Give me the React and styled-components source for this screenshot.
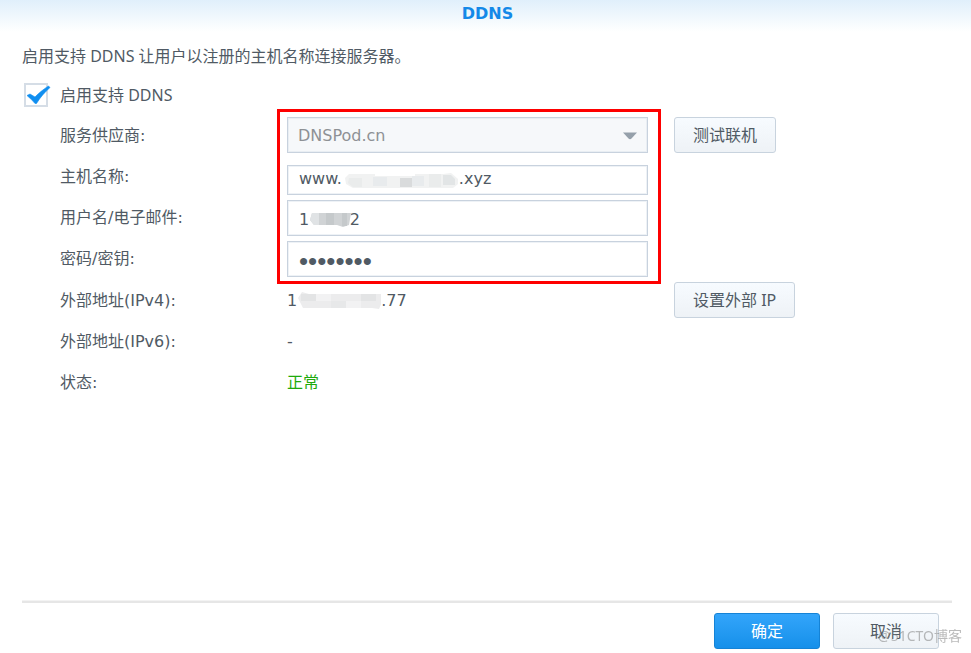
import React, { useState } from 'react'
import styled, { createGlobalStyle } from 'styled-components'

const GlobalStyle = createGlobalStyle`
  * {
    box-sizing: border-box;
  }
  body {
    margin: 0;
    background: #fff;
    color: #505a64;
    font-family: 'DejaVu Sans', 'Noto Sans CJK SC', sans-serif;
    font-size: 16px;
    line-height: 20px;
  }
  button, input, select {
    font: inherit;
    color: inherit;
  }
`
const Dialog = styled.div`
  min-height: 100vh;
  display: flex;
  flex-direction: column;
`
const Header = styled.header`
  height: 32px;
  padding: 4px 0 0 4px;
  text-align: center;
  background: linear-gradient(to bottom, #e0effb, #fff);
  h1 {
    margin: 0;
    font-size: 16px;
    font-weight: 700;
    color: #1489e8;
  }
`
const Content = styled.main`
  flex: 1;
  padding: 14px 22px 24px;
`
const Intro = styled.p`
  margin: 0;
  font-family: 'Noto Sans', 'Noto Sans CJK SC', sans-serif;
`
const CheckLabel = styled.label`
  display: inline-flex;
  align-items: center;
  gap: 12px;
  margin: 17px 0 10px 2px;
  font-family: 'Noto Sans', 'Noto Sans CJK SC', sans-serif;
`
const CheckBox = styled.span`
  position: relative;
  display: flex;
  input {
    appearance: none;
    width: 24px;
    height: 24px;
    margin: 0;
    border: 2px solid #d5dde6;
    background: #fff;
  }
  svg {
    position: absolute;
    left: 0;
    top: 0;
    overflow: visible;
    pointer-events: none;
  }
`
const Form = styled.div`
  display: grid;
  grid-template-columns: 227px minmax(160px, 361px) auto;
  grid-template-rows: 37px 36px 36px 36px 37px;
  grid-auto-rows: 36px;
  row-gap: 5px;
  justify-content: start;
  padding-left: 38px;
`
const Label = styled.label`
  grid-column: 1;
  grid-row: ${({ $row }) => $row};
  align-self: center;
`
const Field = styled.div`
  grid-column: 2;
  grid-row: ${({ $row }) => $row};
  align-self: ${({ $align }) => $align || 'start'};
  position: relative;
  display: flex;
`
const Input = styled.input`
  width: 100%;
  height: ${({ $compact }) => ($compact ? '30px' : '36px')};
  padding: ${({ $compact }) => ($compact ? '0 11px 3px' : '3px 11px 0')};
  border: 1px solid #c8d2de;
  box-shadow: inset 0 0 0 1px #eef2f6;
  border-radius: 0;
  background: #fff;
  outline: none;
`
const PasswordInput = styled(Input)`
  padding-top: 5px;
  font-family: 'Liberation Sans', sans-serif;
  font-size: 26px;
`
const Select = styled.select`
  appearance: none;
  width: 100%;
  height: 36px;
  padding: 2px 32px 0 10px;
  border: 1px solid #c8d2de;
  box-shadow: inset 0 0 0 1px #e9eef3;
  border-radius: 0;
  background: #f6f8fa;
  color: #8e9195;
  opacity: 1;
  outline: none;
`
const Arrow = styled.svg`
  position: absolute;
  right: 11px;
  top: 15px;
  pointer-events: none;
`
const Mask = styled.svg`
  position: absolute;
  left: ${({ $left }) => $left}px;
  top: ${({ $top }) => $top}px;
  pointer-events: none;
`
const Value = styled.output`
  grid-column: 2;
  grid-row: ${({ $row }) => $row};
  align-self: center;
  display: flex;
  align-items: center;
  color: ${({ $ok }) => ($ok ? '#1eaa0c' : 'inherit')};
`
const Frame = styled.div`
  grid-column: 2;
  grid-row: 1 / 5;
  margin: -8px -13px -7px -10px;
  border: 3px solid #fe0000;
  pointer-events: none;
  z-index: 1;
`
const Button = styled.button`
  height: 36px;
  min-width: ${({ $wide }) => ($wide ? '106px' : '0')};
  padding: 0 18px;
  border: 1px solid ${({ $primary }) => ($primary ? '#1583d6' : '#c8d3de')};
  border-radius: 3px;
  background: ${({ $primary }) =>
    $primary
      ? 'linear-gradient(to bottom, #33a5fb, #1690ea)'
      : 'linear-gradient(to bottom, #f7fbff, #eef2f6)'};
  color: ${({ $primary }) => ($primary ? '#fff' : '#505a64')};
  font-family: 'Noto Sans', 'Noto Sans CJK SC', sans-serif;
  cursor: pointer;
`
const SideButton = styled(Button)`
  grid-column: 3;
  grid-row: ${({ $row }) => $row};
  justify-self: start;
  margin-left: 26px;
`
const Footer = styled.footer`
  display: flex;
  justify-content: flex-end;
  gap: 13px;
  margin: 0 19px 0 22px;
  padding: 10px 13px 4px;
  border-top: 2px solid #e6e6e6;
  box-shadow: 0 -1px 0 #f3f3f3;
`
const Watermark = styled.span`
  position: fixed;
  right: 9px;
  bottom: 7px;
  font-family: 'Noto Sans', 'Noto Sans CJK SC', sans-serif;
  font-size: 14px;
  color: rgba(120, 120, 120, 0.5);
  pointer-events: none;
`

const space = (n) => '\u00a0'.repeat(n)

const DDNS = () => {
  const [enabled, setEnabled] = useState(true)
  const [host, setHost] = useState(`www.${space(23)}.xyz`)
  const [user, setUser] = useState(`1${space(8)}2`)
  const [password, setPassword] = useState('password')

  return (
    <Dialog>
      <GlobalStyle />
      <Header>
        <h1>DDNS</h1>
      </Header>
      <Content>
        <Intro>启用支持 DDNS 让用户以注册的主机名称连接服务器。</Intro>
        <CheckLabel>
          <CheckBox>
            <input type='checkbox' checked={enabled} onChange={(e) => setEnabled(e.target.checked)} />
            {enabled && (
              <svg width='26' height='24' viewBox='0 0 26 24'>
                <path d='M3 12.5L6 11L11 14C15 10 19 6.5 24.5 3L26 4.5C20.5 9.5 16.5 14 12.5 20.5H11C8.5 17.5 6 15 3 12.5Z' fill='#0f8ef0' stroke='#0f8ef0' strokeWidth='0.6' />
              </svg>
            )}
          </CheckBox>
          启用支持 DDNS
        </CheckLabel>
        <Form>
          <Label $row={1} htmlFor='provider'>服务供应商:</Label>
          <Field $row={1}>
            <Select id='provider' defaultValue='dnspod'>
              <option value='dnspod'>DNSPod.cn</option>
            </Select>
            <Arrow width='14' height='8' viewBox='0 0 14 8'>
              <path d='M0 0.5H14L8.5 6.5Q7 8 5.5 6.5Z' fill='#95a0aa' />
            </Arrow>
          </Field>
          <SideButton $row={1}>测试联机</SideButton>

          <Label $row={2} htmlFor='host'>主机名称:</Label>
          <Field $row={2} $align='end'>
            <Input $compact id='host' value={host} onChange={(e) => setHost(e.target.value)} />
            <Mask $left={58} $top={7} width='114' height='18' viewBox='0 0 114 18'>
              <path d='M4 2H30V4H70V2H98L106 1L113 7V12L108 16H8L1 12L0 6Z' fill='#f1f2f2' />
              <path d='M4 6H17V15H8L3 11ZM84 2H96V15H84Z' fill='#eaecec' />
              <path d='M55 6H67V15H55Z' fill='#d9dbdc' />
              <path d='M28 5H42V14H28ZM67 4H79V14H67Z' fill='#e8ebed' />
              <path d='M98 3H106L110 7V13H98Z' fill='#e2e5e6' />
            </Mask>
          </Field>

          <Label $row={3} htmlFor='user'>用户名/电子邮件:</Label>
          <Field $row={3}>
            <Input id='user' value={user} onChange={(e) => setUser(e.target.value)} />
            <Mask $left={22} $top={12} width='42' height='16' viewBox='0 0 42 16'>
              <path d='M3 1H42L40 13L34 15L28 13H5L1 8Z' fill='#d0d3d5' />
              <path d='M3 1H10V13H5L1 8Z' fill='#e0e3e5' />
              <path d='M17 1H25V13H17ZM33 1H38V14H33Z' fill='#c5c9cb' />
            </Mask>
          </Field>

          <Label $row={4} htmlFor='password'>密码/密钥:</Label>
          <Field $row={4}>
            <PasswordInput id='password' type='password' value={password} onChange={(e) => setPassword(e.target.value)} />
          </Field>
          <Frame />

          <Label as='span' $row={5}>外部地址(IPv4):</Label>
          <Value $row={5}>
            1
            <svg width='84' height='18' viewBox='0 0 84 18'>
              <path d='M1 6L5 0L12 2H84L86 8L82 17L75 16H6Z' fill='#ececed' />
              <path d='M4 2H19V9H4ZM64 2H79V9H64Z' fill='#e3e4e5' />
              <path d='M19 2H34V9H19ZM49 9H64V16H49Z' fill='#f2f2f3' />
              <path d='M34 9H49V16H34Z' fill='#e7e8e9' />
            </svg>
            .77
          </Value>
          <SideButton $row={5}>设置外部 IP</SideButton>

          <Label as='span' $row={6}>外部地址(IPv6):</Label>
          <Value $row={6}>-</Value>

          <Label as='span' $row={7}>状态:</Label>
          <Value $row={7} $ok>正常</Value>
        </Form>
      </Content>
      <Footer>
        <Button $primary $wide>确定</Button>
        <Button $wide>取消</Button>
      </Footer>
      <Watermark>@51CTO博客</Watermark>
    </Dialog>
  )
}

export default DDNS
